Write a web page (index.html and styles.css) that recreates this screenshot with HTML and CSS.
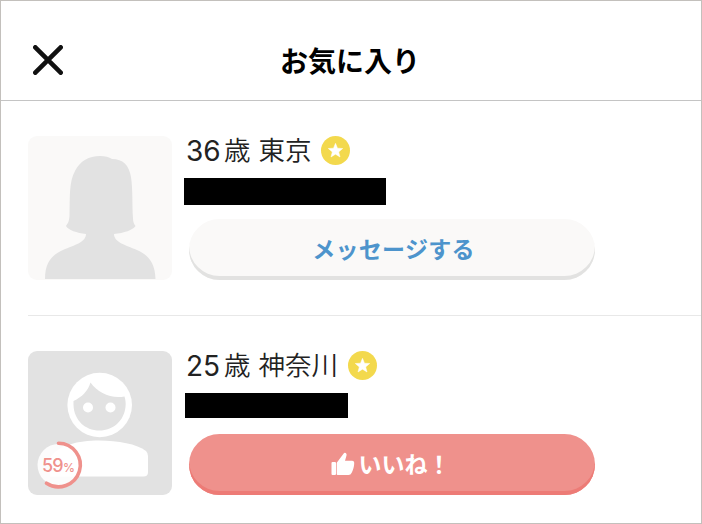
FILE: index.html
```html
<!DOCTYPE html>
<html lang="ja">
<head>
    <meta charset="UTF-8">
    <meta name="viewport" content="width=device-width, initial-scale=1.0">
    <title>お気に入り</title>
    <link rel="stylesheet" href="styles.css">
</head>
<body>
    <header class="header">
        <svg class="close" viewBox="0 0 30 30">
            <path d="M2.3 2.3 27.7 27.7M27.7 2.3 2.3 27.7" />
        </svg>
        <h1>お気に入り</h1>
    </header>

    <ul class="list">
        <li class="item">
            <div class="avatar">
                <svg viewBox="0 0 144 144">
                    <path d="M17 143C17 126 24 119 35 114C47 109 58 106 58 98C49 97 40 94 38 90C41 86 41 84 41.500 80C42 60 41 46 47 35C52 25 61 20 72 20C77 20 81 21 84 23C95 23 101 29 103 41C105 54 104 70 105 82C105 86 106 88 107.500 90C105 94 96 97 86 98C86 106 97 109 109 114C120 119 127 126 127.500 143Z" fill="#e2e2e2" />
                </svg>
            </div>
            <div class="info">
                <p class="profile">
                    <span class="age">36</span><span class="sai">歳</span><span class="area">東京</span>
                    <svg class="star" viewBox="0 0 29 29">
                        <circle cx="14.500" cy="14.500" r="14.500" fill="#f3d94d" />
                        <path d="M14.500 7.300 16.500 12.200 21.700 12.500 17.700 15.900 19 21 14.500 18.200 10 21 11.300 15.900 7.300 12.500 12.500 12.200Z" fill="#fff" stroke="#fff" stroke-width=".5" stroke-linejoin="round" />
                    </svg>
                </p>
                <div class="name"></div>
                <button class="btn message"><span>メッセージする</span></button>
            </div>
        </li>

        <li class="item second">
            <div class="avatar gray">
                <svg viewBox="0 0 144 144">
                    <circle cx="71.700" cy="54" r="32.300" fill="#fff" />
                    <path d="M62.500 31.500C70 42 83 48 96.500 45.500C97.500 49 98 52 97.500 56C96 70 85 79.500 71.500 79.500C57 79.500 46 69 45.500 54L45.500 50C54 46 60 40 62.500 31.500Z" fill="#e2e2e2" />
                    <circle cx="60" cy="56.500" r="5" fill="#fff" />
                    <circle cx="82.500" cy="56.500" r="5" fill="#fff" />
                    <path d="M22 107C31 94 50 89.500 71 89.500C90 89.500 109 93 118 100Q120 102 120 105V121Q120 125.500 115.500 125.500H22Z" fill="#fff" />
                </svg>
                <div class="match">
                    <svg viewBox="0 0 46 46">
                        <circle cx="22.500" cy="23" r="21" fill="#fff" fill-opacity=".9" />
                        <path d="M22.500 1.200A21.800 21.800 0 1 1 10.500 41.200" />
                    </svg>
                    <span>59<small>%</small></span>
                </div>
            </div>
            <div class="info">
                <p class="profile">
                    <span class="age">25</span><span class="sai">歳</span><span class="area">神奈川</span>
                    <svg class="star" viewBox="0 0 29 29">
                        <circle cx="14.500" cy="14.500" r="14.500" fill="#f3d94d" />
                        <path d="M14.500 7.300 16.500 12.200 21.700 12.500 17.700 15.900 19 21 14.500 18.200 10 21 11.300 15.900 7.300 12.500 12.500 12.200Z" fill="#fff" stroke="#fff" stroke-width=".5" stroke-linejoin="round" />
                    </svg>
                </p>
                <div class="name short"></div>
                <button class="btn like">
                    <svg viewBox="0 0 24 24">
                        <path d="M1.500 10H4Q5 10 5 11V22Q5 23 4 23H1.500Q.5 23 .5 22V11Q.5 10 1.500 10ZM5.700 22V11.500Q5.700 10.500 6.500 9.800L12.300 2Q13.300.3 14.700 1Q16 1.700 15.500 3.500L14 8.800H21Q23.500 9 23.200 11.700C23 15 22 18 20.700 20.800Q19.700 23 17.500 23H6.700Q5.700 23 5.700 22Z" fill="#fff" />
                    </svg>
                    <span>いいね！</span>
                </button>
            </div>
        </li>
    </ul>
</body>
</html>
```

FILE: styles.css
```css
*{
    box-sizing: border-box;
}
body{
    margin: 0;
    height: 524px;
    border: 1px solid #c3c0bc;
    background-color: white;
    font-family: Inter, "Noto Sans CJK JP", sans-serif;
    overflow: hidden;
}
.header{
    display: grid;
    grid-template-columns: 62px 1fr 62px;
    align-items: center;
    height: 100px;
    padding-top: 19px;
    border-bottom: 1px solid #c4c4c4;
}
.close{
    width: 30px;
    height: 30px;
    margin-left: 32px;
    fill: none;
    stroke: #111;
    stroke-width: 4.6;
    stroke-linecap: round;
}
h1{
    margin: 0;
    padding: 3px 2px 0 0;
    text-align: center;
    font-size: 28px;
    line-height: 40px;
    font-weight: bold;
    color: #000;
}
.list{
    margin: 0;
    padding: 0 0 0 27px;
    list-style: none;
}
.item{
    display: flex;
    height: 215px;
    padding-top: 35px;
    border-bottom: 1px solid #e8e8e8;
}
.second{
    border-bottom: none;
}
.avatar{
    position: relative;
    width: 144px;
    height: 144px;
    border-radius: 9px;
    background-color: #faf9f8;
}
.avatar > svg{
    display: block;
}
.gray{
    background-color: #e2e2e2;
}
.match{
    position: absolute;
    left: 8px;
    bottom: 7px;
    width: 46px;
    height: 46px;
}
.match svg{
    display: block;
    overflow: visible;
    fill: none;
    stroke-width: 3.6;
    stroke-linecap: round;
}
.match path{
    stroke: #ef918c;
}
.match span{
    position: absolute;
    left: 6px;
    top: 13px;
    font-size: 18px;
    line-height: 22px;
    font-weight: 500;
    color: #ef918c;
    letter-spacing: -0.8px;
}
.match small{
    font-size: 12px;
}
.info{
    padding-left: 12px;
}
.profile{
    display: flex;
    align-items: center;
    height: 29px;
    margin: 0 0 13px;
    padding-left: 2px;
    color: #222;
    font-size: 26.5px;
    line-height: 29px;
    font-weight: 350;
}
.age{
    width: 38px;
    padding-top: 1px;
    font-size: 28px;
    font-weight: 400;
}
.area{
    margin-left: 8px;
}
.star{
    width: 29px;
    height: 29px;
    margin-left: 9.5px;
}
.name{
    width: 202px;
    height: 27px;
    margin-bottom: 14px;
    background-color: #000;
}
.short{
    width: 163px;
    height: 25px;
    margin: 0 0 16px 1px;
}
.btn{
    display: flex;
    align-items: center;
    justify-content: center;
    width: 406px;
    height: 61px;
    margin-left: 5px;
    padding: 0;
    border: none;
    border-radius: 31px;
    font-family: inherit;
    font-size: 23px;
    font-weight: bold;
}
.btn span{
    padding-bottom: 4px;
}
.message{
    background-color: #faf9f8;
    box-shadow: inset 0 -4px #e2e2e1;
    color: #4d94cc;
    letter-spacing: 0.3px;
}
.message span{
    padding-left: 3px;
}
.like{
    background-color: #ef918c;
    box-shadow: inset 0 -4px #ed7b76;
    color: #fff;
}
.like svg{
    width: 24px;
    height: 24px;
    margin: 0 4px 1px -3px;
}
```
